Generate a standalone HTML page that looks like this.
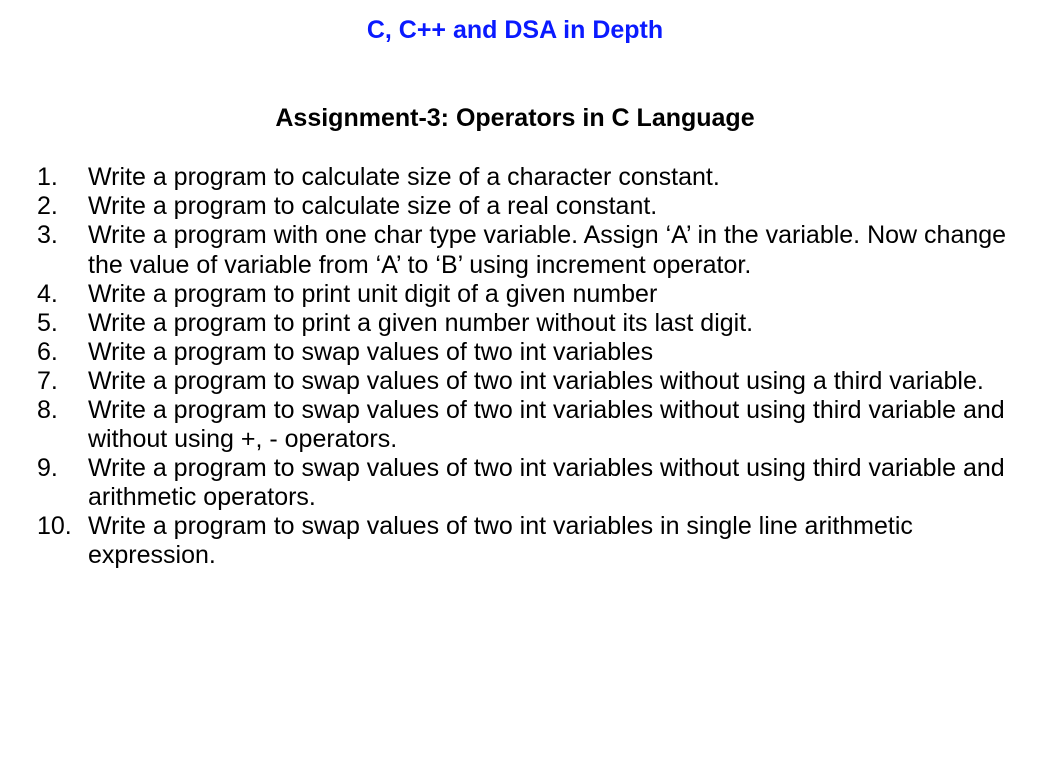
<!DOCTYPE html>
<html><head><meta charset="utf-8"><style>
body{margin:0;width:1053px;height:778px;background:#fff;font-family:"Liberation Sans",Arial,sans-serif;color:#000;position:relative;overflow:hidden}
.t{position:absolute;left:0;width:1030px;text-align:center;font-weight:bold;font-size:25px;line-height:29px;white-space:nowrap}
.n,.l{position:absolute;font-size:25px;line-height:29px;white-space:nowrap}
.n{left:37px}
.l{left:88px}
</style></head><body>
<div class="t" style="top:16px;color:#0a1aff">C, C++ and DSA in Depth</div>
<div class="t" style="top:104px">Assignment-3: Operators in C Language</div>

<div class="n" style="top:163px">1.</div><div class="l" style="top:163px">Write a program to calculate size of a character constant.</div>
<div class="n" style="top:192px">2.</div><div class="l" style="top:192px">Write a program to calculate size of a real constant.</div>
<div class="n" style="top:221px">3.</div><div class="l" style="top:221px">Write a program with one char type variable. Assign ‘A’ in the variable. Now change</div>
<div class="l" style="top:251px">the value of variable from ‘A’ to ‘B’ using increment operator.</div>
<div class="n" style="top:280px">4.</div><div class="l" style="top:280px">Write a program to print unit digit of a given number</div>
<div class="n" style="top:309px">5.</div><div class="l" style="top:309px">Write a program to print a given number without its last digit.</div>
<div class="n" style="top:338px">6.</div><div class="l" style="top:338px">Write a program to swap values of two int variables</div>
<div class="n" style="top:367px">7.</div><div class="l" style="top:367px">Write a program to swap values of two int variables without using a third variable.</div>
<div class="n" style="top:396px">8.</div><div class="l" style="top:396px">Write a program to swap values of two int variables without using third variable and</div>
<div class="l" style="top:425px">without using +, - operators.</div>
<div class="n" style="top:454px">9.</div><div class="l" style="top:454px">Write a program to swap values of two int variables without using third variable and</div>
<div class="l" style="top:483px">arithmetic operators.</div>
<div class="n" style="top:512px">10.</div><div class="l" style="top:512px">Write a program to swap values of two int variables in single line arithmetic</div>
<div class="l" style="top:541px">expression.</div>
</body></html>
